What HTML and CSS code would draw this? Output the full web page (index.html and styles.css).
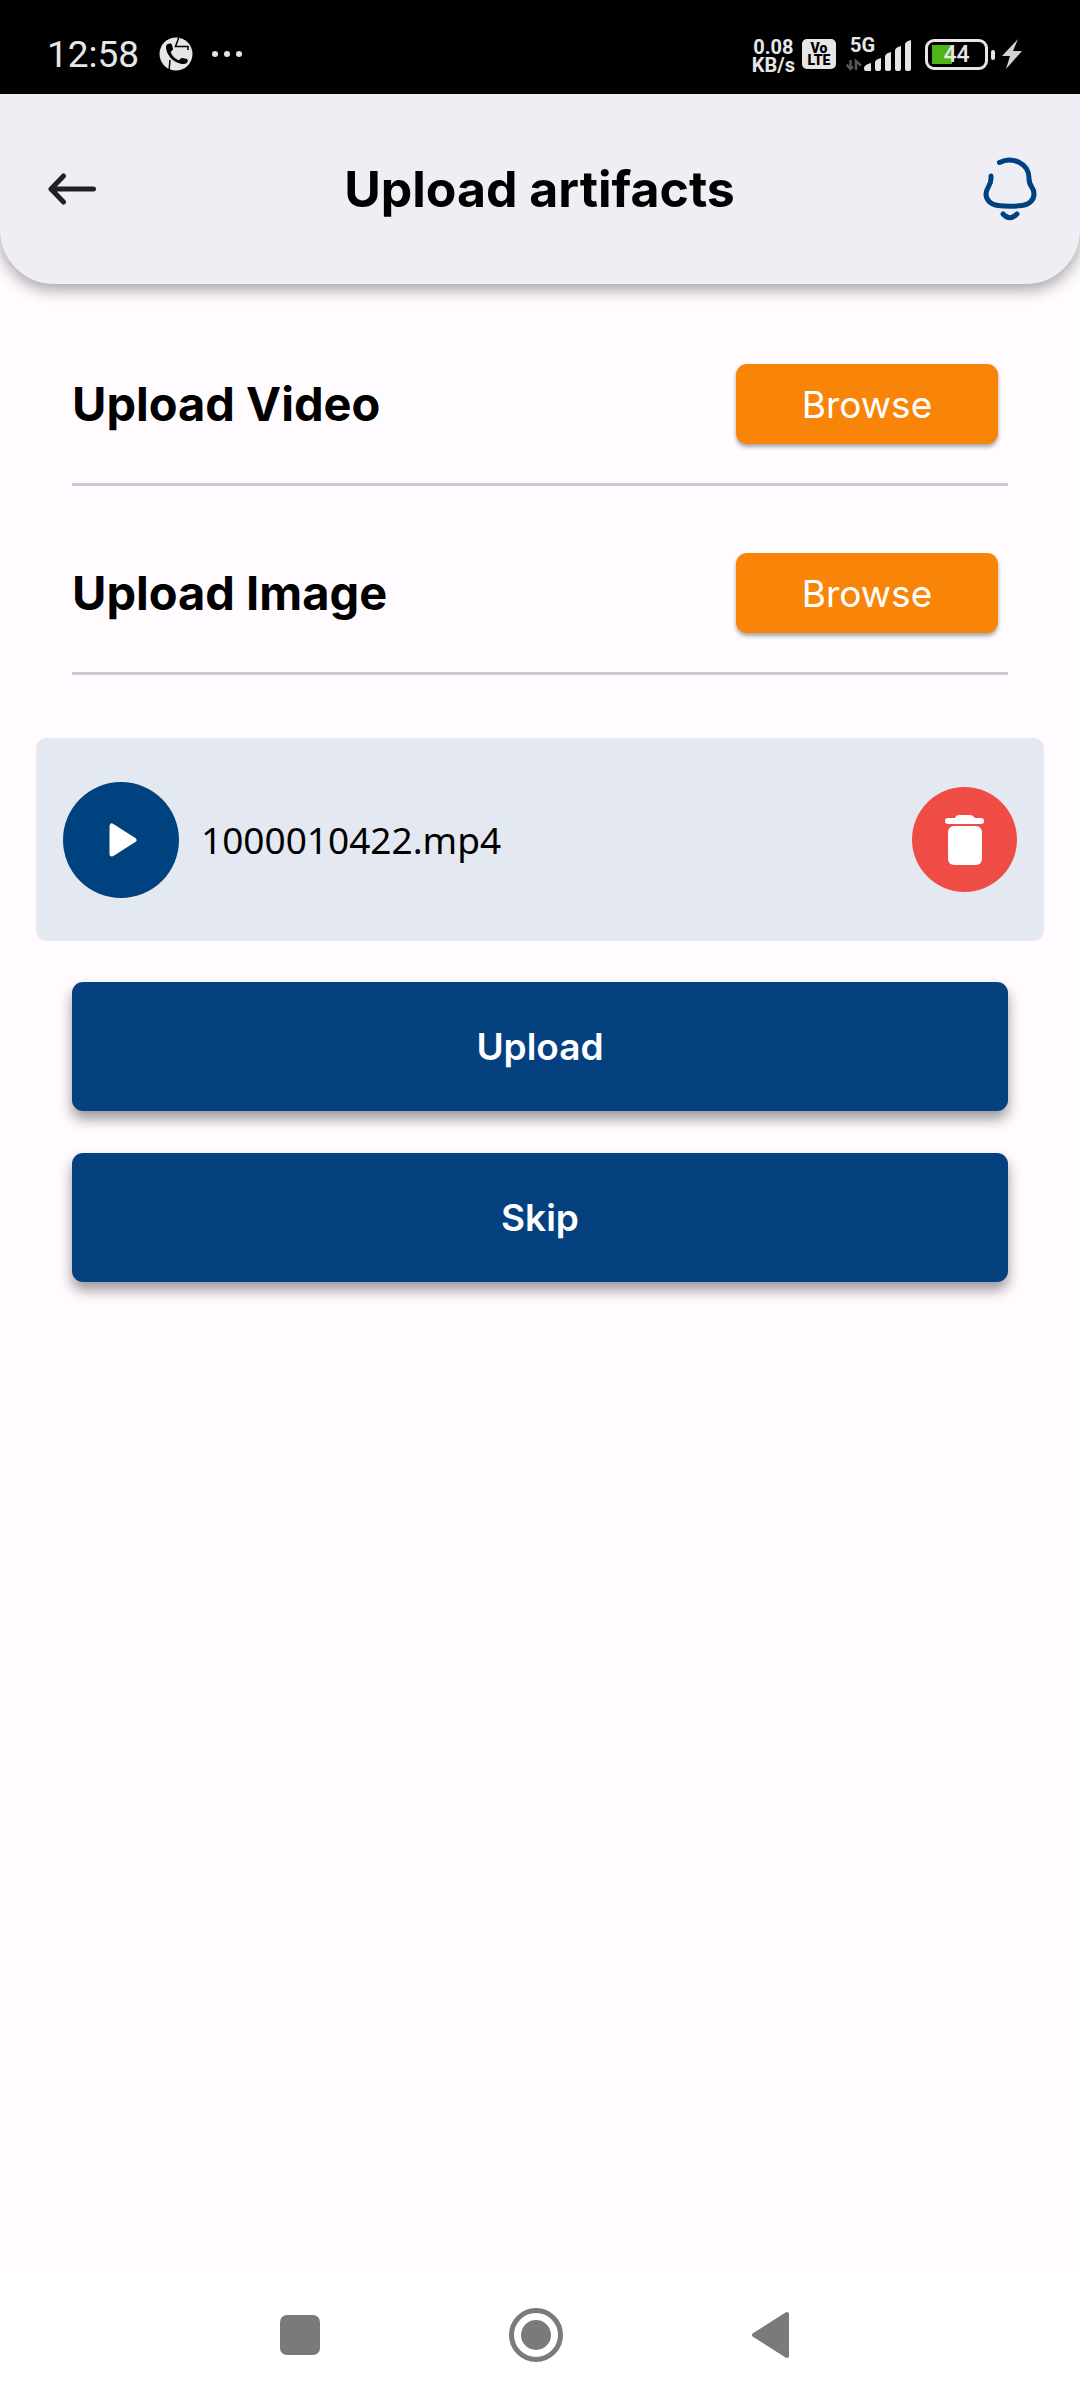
FILE: index.html
```html
<!DOCTYPE html>
<html lang="en">
<head>
<meta charset="utf-8">
<meta name="viewport" content="width=device-width, initial-scale=1">
<title>Upload artifacts</title>
<link rel="stylesheet" href="styles.css">
</head>
<body>
<div class="status-bar">
  <div class="status-left">
    <span class="clock">12:58</span>
    <svg class="call-icon" viewBox="0 0 34 34" width="34" height="34" aria-hidden="true">
      <circle cx="17" cy="17" r="16.5" fill="#e6e6e6"/>
      <path d="M20 0L16.500 9.500H29V13M11 23L10 34" fill="none" stroke="#000" stroke-width="1.5"/>
      <path d="M7 9C9 6 12 6 13 8L14 12C14 14 11 14 12 16C14 20 17 22 19 23C21 24 21 21 23 21L28 22C30 24 28 27 25 27C17 27 7 20 7 9Z" fill="#000"/>
    </svg>
    <svg class="more-icon" viewBox="0 0 32 8" width="32" height="8" aria-hidden="true">
      <g fill="#e6e6e6"><circle cx="4" cy="4" r="3"/><circle cx="16" cy="4" r="3"/><circle cx="28" cy="4" r="3"/></g>
    </svg>
  </div>
  <div class="status-right">
    <div class="net-speed">0.08<br>KB/s</div>
    <div class="volte">Vo<br>LTE</div>
    <div class="signal">
      <span class="network">5G</span>
      <svg viewBox="0 0 68 34" width="68" height="34" aria-hidden="true">
        <path d="M4.500 23V31M0.500 27.500L4.500 32L7 29.500M10 33V24L15 28.500M10 24V32" fill="none" stroke="#555" stroke-width="2.500"/>
        <g fill="#e6e6e6"><path d="M18 31Q18 28 25 26V34H20Q18 34 18 32Z"/><path d="M29 25Q30 22 35 21V32Q35 34 33 34H31Q29 34 29 32Z"/><path d="M39 19Q40 16 45 15V32Q45 34 43 34H41Q39 34 39 32Z"/><path d="M49 13Q50 10 55 9V32Q55 34 53 34H51Q49 34 49 32Z"/><path d="M59 7Q60 4 65 3V32Q65 34 63 34H61Q59 34 59 32Z"/></g>
      </svg>
    </div>
    <div class="battery"><span>44</span></div>
    <svg class="bolt" viewBox="0 0 20 30" width="20" height="30" aria-hidden="true"><path d="M16 0L0 17H8L4 30L20 12H11Z" fill="#d2d2d2"/></svg>
  </div>
</div>

<header class="app-header">
  <button class="icon-button" type="button" aria-label="Back">
    <svg viewBox="0 0 48 32" width="48" height="32"><path d="M15.500 3L3 16L15.500 29M3 16H45.500" fill="none" stroke="#212121" stroke-width="5" stroke-linecap="round" stroke-linejoin="round"/></svg>
  </button>
  <h1>Upload artifacts</h1>
  <button class="icon-button" type="button" aria-label="Notifications">
    <svg viewBox="0 0 54 64" width="54" height="64"><path d="M16.500 5.500C29 -1 46 6 46 21C46 31 51 29 51 37C51 44 45 48 39 48.500Q27 50 15 48.500C8 48 3 43 3 37C3 30 9 29 8 19M20 57Q27 64.500 34 57" fill="none" stroke="#00417f" stroke-width="5" stroke-linecap="round" stroke-linejoin="round"/></svg>
  </button>
</header>

<main>
  <section class="upload-row">
    <h2>Upload Video</h2>
    <button class="browse" type="button">Browse</button>
  </section>
  <section class="upload-row">
    <h2>Upload Image</h2>
    <button class="browse" type="button">Browse</button>
  </section>

  <div class="file-card">
    <button class="round play" type="button" aria-label="Play">
      <svg viewBox="0 0 30 36" width="30" height="36"><path d="M4 4V32L26 18Z" fill="#fff" stroke="#fff" stroke-width="5" stroke-linejoin="round"/></svg>
    </button>
    <span class="file-name">1000010422.mp4</span>
    <button class="round delete" type="button" aria-label="Delete">
      <svg viewBox="0 0 40 50" width="40" height="50"><path d="M3 3H10Q11 0 14 0H25Q28 0 30 3H36Q39 3 39 6Q39 9 36 9H3Q0 9 0 6Q0 3 3 3Z" fill="#fff"/><rect x="3" y="11" width="34" height="39" rx="6" fill="#fff"/></svg>
    </button>
  </div>

  <div class="actions">
    <button class="primary" type="button">Upload</button>
    <button class="primary" type="button">Skip</button>
  </div>
</main>

<nav class="system-nav">
  <button type="button" aria-label="Recent apps"><svg viewBox="0 0 56 56" width="56" height="56"><rect x="8" y="8" width="40" height="40" rx="7" fill="#7a7a7a"/></svg></button>
  <button type="button" aria-label="Home"><svg viewBox="0 0 56 56" width="56" height="56"><circle cx="28" cy="28" r="24.500" fill="none" stroke="#7a7a7a" stroke-width="5"/><circle cx="28" cy="28" r="15" fill="#7a7a7a"/></svg></button>
  <button type="button" aria-label="Back"><svg viewBox="0 0 56 56" width="56" height="56"><path d="M10 28L43 7V49Z" fill="#7a7a7a" stroke="#7a7a7a" stroke-width="4" stroke-linejoin="round"/></svg></button>
</nav>
</body>
</html>
```
FILE: styles.css
```css
* { box-sizing: border-box; }

body {
  margin: 0;
  min-height: 100vh;
  display: flex;
  flex-direction: column;
  background: #fffbff;
  color: #000;
  font-family: Inter, "Open Sans", sans-serif;
}

h1, h2 { margin: 0; font-weight: 700; }

button {
  margin: 0;
  padding: 0;
  border: 0;
  background: none;
  font: inherit;
  color: inherit;
}

svg { display: block; }

/* Phone status bar */
.status-bar {
  position: relative;
  z-index: 1;
  height: 94px;
  padding: 14px 58px 0 47px;
  display: flex;
  justify-content: space-between;
  background: #000;
  color: #e6e6e6;
  font-family: Roboto, sans-serif;
}

.status-left, .status-right {
  height: 80px;
  display: flex;
  align-items: center;
}

.clock { padding-top: 2px; font-size: 37px; line-height: 40px; }
.call-icon { margin-left: 20px; }
.more-icon { margin-left: 18px; }

.net-speed {
  padding-top: 3px;
  font-size: 20px;
  line-height: 18px;
  font-weight: 700;
  text-align: center;
}

.volte {
  width: 34px;
  height: 30px;
  margin-left: 7px;
  padding-top: 3px;
  border-radius: 5px;
  background: #e6e6e6;
  color: #000;
  font-size: 14px;
  line-height: 12px;
  font-weight: 900;
  text-align: center;
}

.signal { position: relative; margin-left: 10px; }
.network {
  position: absolute;
  left: 4px;
  top: -2px;
  font-size: 20px;
  line-height: 20px;
  font-weight: 700;
}

.battery {
  position: relative;
  width: 63px;
  height: 31px;
  margin: 0 14px 0 11px;
  border: 3px solid #e6e6e6;
  border-radius: 9px;
  padding: 2px 4px;
  background: linear-gradient(#4fb417, #4fb417) 4px center / 20px 19px no-repeat;
  font-size: 23px;
  line-height: 22px;
  font-weight: 500;
  text-align: center;
}
.battery::after {
  content: "";
  position: absolute;
  right: -10px;
  top: 8px;
  width: 4px;
  height: 10px;
  border-radius: 2px;
  background: #e6e6e6;
}

/* App header */
.app-header {
  height: 190px;
  padding: 0 43px 0 48px;
  display: flex;
  align-items: center;
  justify-content: space-between;
  border-radius: 0 0 54px 54px;
  background: #efeef5;
  box-shadow: 0 6px 16px rgba(0, 0, 0, 0.35);
}

h1 { font-size: 50px; line-height: 60px; }

/* Upload rows */
main { flex: 1; padding: 13px 36px 0; }

.upload-row {
  height: 189px;
  margin: 0 36px;
  padding: 28px 10px 0 0;
  display: flex;
  align-items: center;
  justify-content: space-between;
  border-bottom: 3px solid #cfc9d4;
}

h2 { font-size: 47px; line-height: 60px; }

.browse {
  width: 262px;
  height: 80px;
  border-radius: 11px;
  background: #f88408;
  color: #fff;
  font-size: 37px;
  box-shadow: 0 3px 4px rgba(0, 0, 0, 0.35);
}

/* Selected file */
.file-card {
  height: 203px;
  margin-top: 63px;
  padding: 0 27px;
  display: flex;
  align-items: center;
  border-radius: 11px;
  background: #e4e8f1;
}

.file-name {
  flex: 1;
  margin-left: 22px;
  font-family: "Noto Sans", sans-serif;
  font-size: 37px;
  line-height: 48px;
}

.round {
  border-radius: 50%;
  display: grid;
  place-items: center;
}
.play { width: 116px; height: 116px; padding-left: 4px; background: #00417f; }
.delete { width: 105px; height: 105px; background: #f04c46; }

/* Bottom actions */
.actions {
  margin: 41px 36px 0;
  display: grid;
  gap: 42px;
}

.primary {
  height: 129px;
  border-radius: 11px;
  background: #05417f;
  color: #fff;
  font-size: 37px;
  font-weight: 600;
  box-shadow: 0 8px 14px rgba(0, 0, 0, 0.4);
}

/* Phone navigation bar */
.system-nav {
  height: 130px;
  padding-right: 8px;
  display: flex;
  align-items: center;
  justify-content: center;
  gap: 180px;
  background: #fff;
}
```
